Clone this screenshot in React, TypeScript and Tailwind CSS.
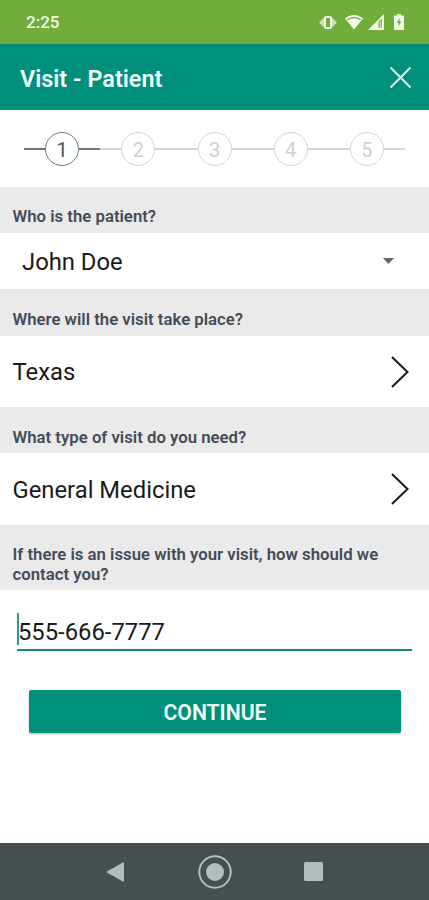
import { useState } from 'react';

const STEPS = [1, 2, 3, 4, 5];

export default function App() {
  const [phone, setPhone] = useState('555-666-7777');

  return (
    <div className="flex h-[900px] w-full flex-col overflow-hidden bg-white font-['Roboto',sans-serif] text-[#1a1a1a]">
      <StatusBar />

      <header className="flex h-[66px] shrink-0 items-center justify-between bg-[#008f7b] pl-5 pr-[17px]">
        <h1 className="pt-[3px] text-[23.4px] font-semibold leading-7 text-[#effffa]">Visit - Patient</h1>
        <button type="button" aria-label="Close" className="text-[#d5f7f0]">
          <svg viewBox="0 0 23 23" fill="none" stroke="currentColor" strokeWidth={2} className="block size-[23px]">
            <path d="M1.5 1.5l20 20M21.5 1.5l-20 20" />
          </svg>
        </button>
      </header>

      <Stepper current={1} />

      <main className="flex flex-1 flex-col">
        <Question className="h-[46px] pb-[7px]">Who is the patient?</Question>
        <button type="button" className="flex h-14 items-center justify-between pl-[22px] pr-[35px] text-left text-[23.8px]">
          <span className="pt-1">John Doe</span>
          <svg viewBox="0 0 11 6" fill="#666666" className="h-1.5 w-[11px]">
            <path d="M0 0h11L5.5 6z" />
          </svg>
        </button>

        <Question className="h-[47px] pb-[7px]">Where will the visit take place?</Question>
        <PickerRow value="Texas" className="h-[71px]" />

        <Question className="h-[46px] pb-1.5">What type of visit do you need?</Question>
        <PickerRow value="General Medicine" className="h-[72px]" />

        <Question className="h-[65px] pb-1.5">If there is an issue with your visit, how should we contact you?</Question>

        <div className="mx-[17px] mt-[23px] flex h-[38px] items-start border-b-2 border-[#168a7a]">
          <div className="h-8 w-0.5 shrink-0 bg-[#2b9c8b]" />
          <input
            aria-label="Phone number"
            value={phone}
            onChange={(e) => setPhone(e.target.value)}
            className="-ml-px h-9 flex-1 bg-transparent pt-px text-[23.8px] outline-none"
          />
        </div>

        <button
          type="button"
          className="mx-[29px] mr-[28px] mt-[39px] h-[43px] rounded-[2px] bg-[#008f7b] pt-[3px] text-[21.2px] font-semibold text-[#effffa] shadow-[0_1px_2px_rgba(0,0,0,0.3)]"
        >
          CONTINUE
        </button>
      </main>

      <NavBar />
    </div>
  );
}

function StatusBar() {
  return (
    <div className="flex h-11 shrink-0 items-center justify-between bg-[#70ad3a] pl-[26px] pr-[25px] text-[#f4fbe9]">
      <span className="pt-0.5 text-[17px] font-medium">2:25</span>
      <div className="flex items-center">
        {/* vibrate */}
        <svg viewBox="0 0 18 16" className="h-4 w-[18px]">
          <path d="M5 3.500v10L0 8.500zM13 3.500v10l5-5z" fill="currentColor" opacity={0.7} />
          <rect x="6" y="3" width="6" height="11" rx="1" fill="none" stroke="currentColor" strokeWidth={2} />
        </svg>
        {/* wifi */}
        <svg viewBox="0 0 18 16" className="ml-2 h-4 w-[18px]">
          <path d="M0 4.500C5 -.3 13 -.3 18 4.500L9 15.500z" fill="currentColor" />
          <path d="M2.300 5.800C6 3 12 3 15.700 5.800" fill="none" stroke="#70ad3a" strokeWidth={1.2} />
        </svg>
        {/* signal */}
        <svg viewBox="0 0 16 16" className="ml-[5px] size-4">
          <path d="M16 0v16H0z" fill="currentColor" />
          <path d="M10.500 7.500L13.800 4.500v9.300h-3.300z" fill="#70ad3a" />
          <path d="M12.200 7v6.800" stroke="currentColor" strokeWidth={0.8} />
        </svg>
        {/* battery */}
        <svg viewBox="0 0 10 16" className="ml-[10px] h-4 w-2.5">
          <path d="M3 0h4v1.500h2q1 0 1 1V15q0 1-1 1H1q-1 0-1-1V2.500q0-1 1-1h2z" fill="currentColor" />
          <path d="M5.500 4L2.700 9h2V12.500L7.300 7.500H5.500z" fill="#70ad3a" />
        </svg>
      </div>
    </div>
  );
}

function Stepper({ current }: { current: number }) {
  return (
    <ol className="flex h-[77px] shrink-0 items-center px-6">
      {STEPS.map((step) => {
        const active = step === current;
        const line = active ? 'bg-[#72777b]' : 'bg-[#d4d4d4]';
        return (
          <li key={step} className="flex flex-1 items-center">
            <span className={`h-0.5 flex-1 ${line}`} />
            <span
              className={`flex size-[34px] items-center justify-center rounded-full border-[1.5px] pt-0.5 text-xl ${
                active ? 'border-[#72777b] text-[#50565d]' : 'border-[#d4d4d4] text-[#cfcfcf]'
              }`}
            >
              {step}
            </span>
            <span className={`h-0.5 flex-1 ${line}`} />
          </li>
        );
      })}
    </ol>
  );
}

function Question({ children, className }: { children: React.ReactNode; className: string }) {
  return (
    <div className={`flex shrink-0 items-end bg-[#eaeaea] pl-[12.5px] pr-8 ${className}`}>
      <h2 className="text-[16.75px] font-semibold leading-5 text-[#454c59]">{children}</h2>
    </div>
  );
}

function PickerRow({ value, className }: { value: string; className: string }) {
  return (
    <button type="button" className={`flex shrink-0 items-center justify-between pl-[12.5px] pr-5 text-left text-[23.8px] ${className}`}>
      <span className="pt-[3px]">{value}</span>
      <svg viewBox="0 0 18 32" fill="none" stroke="currentColor" strokeWidth={2} className="h-8 w-[18px]">
        <path d="M1 1l15.500 15L1 31" />
      </svg>
    </button>
  );
}

function NavBar() {
  return (
    <nav className="flex h-[57px] shrink-0 items-center justify-between bg-[#464e52] pl-[106px] pr-[106px] text-[#b4bcbf]">
      <svg viewBox="0 0 18 20" fill="currentColor" className="h-5 w-[18px]">
        <path d="M0 10L17 .5Q18 0 18 1v18q0 1-1 .5z" />
      </svg>
      <svg viewBox="0 0 34 34" className="ml-px size-[34px]">
        <circle cx="17" cy="17" r="15.700" fill="none" stroke="currentColor" strokeWidth={2} />
        <circle cx="17" cy="17" r="9" fill="currentColor" />
      </svg>
      <svg viewBox="0 0 19 19" fill="currentColor" className="size-[19px]">
        <rect width="19" height="19" rx="1.500" />
      </svg>
    </nav>
  );
}
